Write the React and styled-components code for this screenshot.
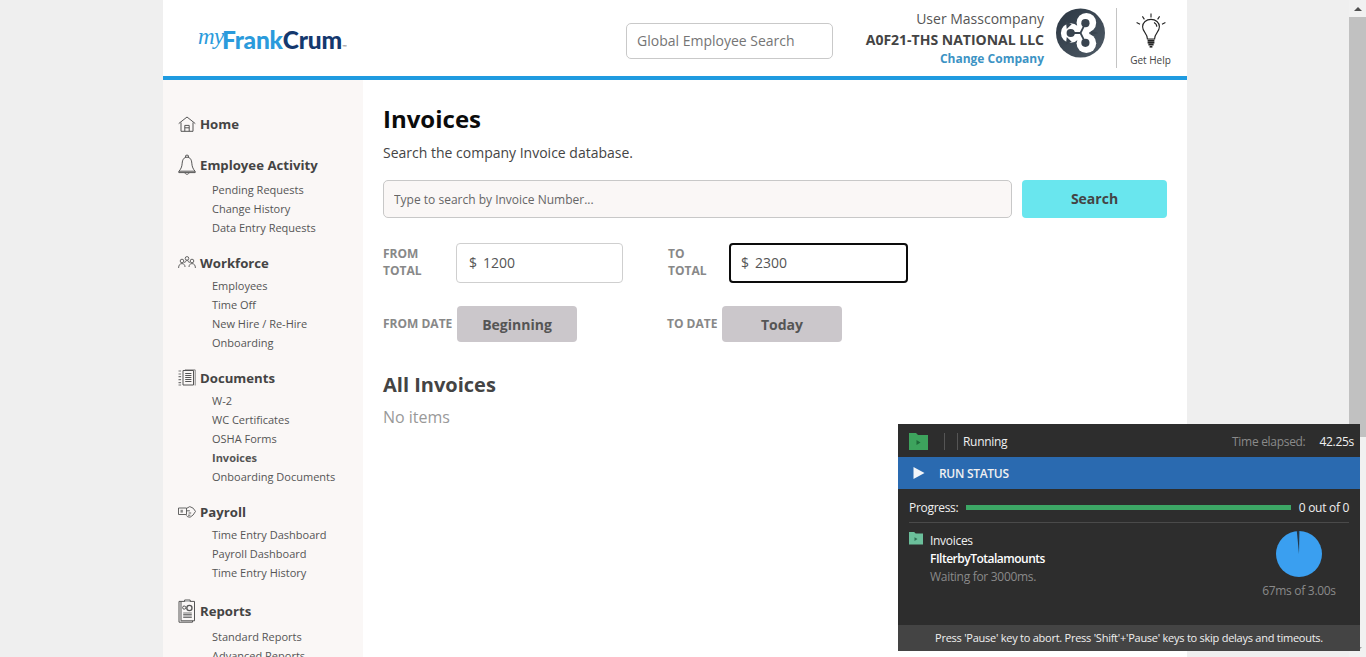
import React from "react";
import styled, { createGlobalStyle } from "styled-components";

const GlobalStyle = createGlobalStyle`
  html, body {
    margin: 0;
    height: 100%;
    overflow: hidden;
    background: #efefef;
    font-family: "Open Sans", "Liberation Sans", sans-serif;
  }
`;

// Sidebar data
const NAV = [
  { title: "Home", icon: "home", height: 27 },
  {
    title: "Employee Activity",
    icon: "bell",
    height: 31,
    links: ["Pending Requests", "Change History", "Data Entry Requests"],
  },
  {
    title: "Workforce",
    icon: "people",
    height: 27,
    links: ["Employees", "Time Off", "New Hire / Re-Hire", "Onboarding"],
  },
  {
    title: "Documents",
    icon: "docs",
    height: 27,
    links: ["W-2", "WC Certificates", "OSHA Forms", "Invoices", "Onboarding Documents"],
  },
  {
    title: "Payroll",
    icon: "hand",
    height: 27,
    links: ["Time Entry Dashboard", "Payroll Dashboard", "Time Entry History"],
  },
  {
    title: "Reports",
    icon: "reports",
    height: 33,
    links: ["Standard Reports", "Advanced Reports"],
  },
];

const NavIcon = ({ name }) => {
  const common = { fill: "none", stroke: "#555", strokeWidth: 1, strokeLinejoin: "round" };
  if (name === "home") {
    return (
      <svg width="18" height="16" viewBox="0 0 18 16" {...common}>
        <path d="M.7 7.6 9 1l8.3 6.6" />
        <path d="M3 6.5v8.8h12V6.5" />
        <path d="M6.8 15.3V9.4h4.4v5.9" />
        <path d="M6.8 11.8h4.4" />
      </svg>
    );
  }
  if (name === "bell") {
    return (
      <svg width="18" height="22" viewBox="0 0 18 22" {...common}>
        <path d="M7.6 3.4V1.6Q9 .4 10.4 1.6v1.8" />
        <path d="M9 3.2c-3.2 0-4.6 2.6-4.8 6C4 13 2.6 15.4 1 17.2h16c-1.6-1.8-3-4.2-3.2-8-.2-3.4-1.6-6-4.8-6Z" />
        <path d="M.8 17.2v1.4h16.4v-1.4" />
        <path d="M7 18.8c.4 2 3.6 2 4 0" />
      </svg>
    );
  }
  if (name === "people") {
    return (
      <svg width="18" height="13" viewBox="0 0 18 13" {...common} strokeWidth=".9">
        <circle cx="4" cy="5" r="1.8" />
        <path d="M.6 12c0-3 1.4-4.4 3.4-4.4S7 9 7 11" />
        <circle cx="9" cy="2.4" r="1.8" />
        <path d="M6.6 7c.4-1.6 1.2-2.4 2.4-2.4s2 .8 2.4 2.4" />
        <circle cx="14" cy="5" r="1.8" />
        <path d="M11 11c0-2 1-3.4 3-3.4s3.4 1.4 3.4 4.4" />
      </svg>
    );
  }
  if (name === "docs") {
    return (
      <svg width="18" height="18" viewBox="0 0 18 18" {...common}>
        <path d="M5 1.5h10.5v14.5H5z" />
        <path d="M7 1.5v-.6h10.2v15.6" strokeWidth=".7" />
        <path d="M7.2 4.5h6.2M7.2 6.5h6.2M7.2 8.5h6.2M7.2 10.5h6.2M7.2 12.5h6.2" strokeWidth="1.1" />
        <path d="M.5 2h2.6M.5 5h2.6M.5 7.6h2.6M.5 10.6h2.6M.5 13.6h2.6M.5 16h2.6" strokeWidth="1.2" stroke="#777" />
      </svg>
    );
  }
  if (name === "hand") {
    return (
      <svg width="18" height="12" viewBox="0 0 18 12" {...common} strokeWidth=".9">
        <path d="M.5 2h8v6.5h-8z" />
        <path d="M2.5 3.8h2.4v2.8H2.5z" fill="#888" stroke="none" />
        <path d="M8.5 2.4 11.8.6l3.4 1.6 2.3 3.2-2.4 3.6-3 2.2-2.4-.4-1.4-1.4" />
        <path d="M8.5 4.8h3.4M10.6 7h2.6M10 9.2h2.4" />
      </svg>
    );
  }
  return (
    <svg width="18" height="24" viewBox="0 0 18 24" {...common}>
      <path d="M3 2.4H1v20.8h13.5v-1.4" />
      <path d="M3 2.4h13.5v19.4H3z" />
      <path d="M6.6 2.6V1h5.6v1.6" fill="#fff" />
      <circle cx="6.2" cy="8.6" r="1.6" />
      <circle cx="11.4" cy="9" r="2.6" strokeWidth="1.3" />
      <path d="M5.2 14h8.6M5.2 15.5h8.6M5.2 17h8.6M5.2 18.5h8.6" stroke="#777" strokeWidth="1" />
    </svg>
  );
};

const AvatarLogo = () => (
  <svg width="49" height="50" viewBox="0 0 50 50">
    <defs>
      <linearGradient id="avatarFill" x1="0" y1="0" x2="1" y2="1">
        <stop offset="0" stopColor="#2b3642" />
        <stop offset="1" stopColor="#4f5b66" />
      </linearGradient>
    </defs>
    <circle cx="25" cy="25" r="25" fill="url(#avatarFill)" />
    <g fill="#fff">
      <circle cx="15" cy="25" r="10" />
      <circle cx="31" cy="14.5" r="10" />
      <circle cx="31" cy="35.5" r="10" />
      <path d="M20 18h14v14H20z" />
    </g>
    <path d="M43 25l-7-2v4zM10 13l6 3-5 5zM10 37l6-3-5-5z" fill="#39444f" />
    <path d="M15 25h10l5-10M25 25l5 10" stroke="#39444f" strokeWidth="1.8" fill="none" />
    <g fill="#39444f">
      <circle cx="15" cy="25" r="4.2" />
      <circle cx="30" cy="15" r="4.2" />
      <circle cx="30" cy="35" r="4.2" />
    </g>
  </svg>
);

const BulbIcon = () => (
  <svg width="32" height="36" viewBox="0 0 32 36" fill="none" stroke="#222" strokeWidth="1.1">
    <path d="M16 .5v4M7.4 3.4l2 3M24.6 3.4l-2 3M1.6 9.6l3.4 1.6M30.4 9.6 27 11.2" />
    <path d="M12.4 26c0-3-1-4.4-2.6-6.6-1.4-2-2.2-3.6-2.2-5.6 0-4.2 3.6-7.4 8.4-7.4s8.4 3.2 8.4 7.4c0 2-.8 3.6-2.2 5.6-1.6 2.2-2.6 3.6-2.6 6.6Z" />
    <path d="M19 9.4c1.6.8 2.8 2.4 2.8 4.4" />
    <path d="M12.6 27.6h6.8M12.6 29.6h6.8M13.4 31.6h5.2" strokeWidth="1.6" />
    <path d="M14.6 33.8h2.8" strokeWidth="1.6" />
  </svg>
);

const PanelFolder = ({ size }) => (
  <svg width={size} height={size * 0.9} viewBox="0 0 19 17">
    <path d="M0 0h7l2 2h10v15H0z" fill={size > 14 ? "#3da35d" : "#6bbf9b"} />
    <path d="M7.5 7v5l4-2.5z" fill={size > 14 ? "#1f6b3a" : "#2f6f55"} />
  </svg>
);

const App = () => (
  <>
    <GlobalStyle />
    <Viewport>
      <PageArea>
        <Page>
          <Header>
            <Logo>
              <LogoMy>my</LogoMy>
              <LogoFrank>Frank</LogoFrank>
              <LogoCrum>Crum</LogoCrum>
              <LogoMark>™</LogoMark>
            </Logo>
            <GlobalSearch placeholder="Global Employee Search" />
            <UserBlock>
              <UserName>User Masscompany</UserName>
              <CompanyName>A0F21-THS NATIONAL LLC</CompanyName>
              <ChangeCompany href="#">Change Company</ChangeCompany>
            </UserBlock>
            <Avatar>
              <AvatarLogo />
            </Avatar>
            <HelpBlock>
              <BulbIcon />
              <HelpLabel>Get Help</HelpLabel>
            </HelpBlock>
          </Header>
          <Body>
            <Sidebar>
              {NAV.map((group) => (
                <NavGroup key={group.title}>
                  <NavHeading $height={group.height}>
                    <NavIconSlot>
                      <NavIcon name={group.icon} />
                    </NavIconSlot>
                    {group.title}
                  </NavHeading>
                  {group.links &&
                    group.links.map((link) => (
                      <NavLink key={link} $active={link === "Invoices"}>
                        {link}
                      </NavLink>
                    ))}
                </NavGroup>
              ))}
            </Sidebar>
            <Main>
              <Title>Invoices</Title>
              <Subtitle>Search the company Invoice database.</Subtitle>
              <SearchRow>
                <SearchInput placeholder="Type to search by Invoice Number..." />
                <SearchButton>Search</SearchButton>
              </SearchRow>
              <FilterRow>
                <FilterCell $width={285}>
                  <FilterLabel $width={73}>
                    FROM
                    <br />
                    TOTAL
                  </FilterLabel>
                  <MoneyField $width={167}>
                    <span>$</span>
                    <span>1200</span>
                  </MoneyField>
                </FilterCell>
                <FilterCell>
                  <FilterLabel $width={61}>
                    TO
                    <br />
                    TOTAL
                  </FilterLabel>
                  <MoneyField $width={179} $focused>
                    <span>$</span>
                    <span>2300</span>
                  </MoneyField>
                </FilterCell>
              </FilterRow>
              <DateRow>
                <FilterCell $width={284}>
                  <FilterLabel $width={74}>FROM DATE</FilterLabel>
                  <DateButton>Beginning</DateButton>
                </FilterCell>
                <FilterCell>
                  <FilterLabel $width={55}>TO DATE</FilterLabel>
                  <DateButton>Today</DateButton>
                </FilterCell>
              </DateRow>
              <SectionTitle>All Invoices</SectionTitle>
              <EmptyText>No items</EmptyText>
            </Main>
          </Body>
        </Page>
      </PageArea>
      <ScrollTrack>
        <ScrollArrow />
        <ScrollThumb />
        <ScrollArrow $down />
      </ScrollTrack>
    </Viewport>

    <RunPanel>
      <PanelTop>
        <PanelFolder size={19} />
        <TopDivider $left={16} />
        <TopDivider $left={12} />
        <RunningText>Running</RunningText>
        <ElapsedLabel>Time elapsed:</ElapsedLabel>
        <ElapsedValue>42.25s</ElapsedValue>
      </PanelTop>
      <StatusBar>
        <svg width="12" height="12" viewBox="0 0 12 12">
          <path d="M.5 0v12L11.5 6z" fill="#f2f5f9" />
        </svg>
        RUN STATUS
      </StatusBar>
      <PanelBody>
        <ProgressRow>
          Progress:
          <ProgressBar />
          <span>0 out of 0</span>
        </ProgressRow>
        <StepRow>
          <StepIcon>
            <PanelFolder size={14} />
          </StepIcon>
          <StepText>
            <StepFolder>Invoices</StepFolder>
            <StepName>FIlterbyTotalamounts</StepName>
            <StepWait>Waiting for 3000ms.</StepWait>
          </StepText>
          <TimerBlock>
            <svg width="46" height="46" viewBox="0 0 46 46">
              <circle cx="23" cy="23" r="23" fill="#3a9ff0" />
              <path d="M23 23 20.8 0h2.6z" fill="#23384a" />
            </svg>
            <TimerText>67ms of 3.00s</TimerText>
          </TimerBlock>
        </StepRow>
      </PanelBody>
      <PanelFooter>Press 'Pause' key to abort. Press 'Shift'+'Pause' keys to skip delays and timeouts.</PanelFooter>
    </RunPanel>
  </>
);

const Viewport = styled.div`
  display: flex;
  height: 100vh;
  overflow: hidden;
`;

const PageArea = styled.div`
  flex: 1;
  display: flex;
  justify-content: center;
`;

const Page = styled.div`
  width: 1024px;
  margin-left: 1px;
  background: #fff;
  display: flex;
  flex-direction: column;
`;

const Header = styled.header`
  height: 76px;
  flex: none;
  display: flex;
  align-items: flex-start;
  border-bottom: 4px solid #1f9be0;
  color: #444;
`;

const Logo = styled.div`
  width: 428px;
  margin-left: 35px;
  margin-top: 26px;
  display: flex;
  align-items: baseline;
  font-family: Lato, "Open Sans", sans-serif;
  font-weight: 900;
  font-size: 24.5px;
  line-height: 28px;
  letter-spacing: -0.2px;
`;

const LogoMy = styled.span`
  font-family: "Liberation Serif", serif;
  font-style: italic;
  font-weight: 400;
  font-size: 23px;
  letter-spacing: -0.5px;
  color: #2b9bdc;
  width: 24px;
  transform: translateY(-5px);
`;

const LogoFrank = styled.span`
  color: #2b9bdc;
`;

const LogoCrum = styled.span`
  color: #14386e;
`;

const LogoMark = styled.span`
  font-size: 6px;
  font-weight: 400;
  color: #777;
`;

const GlobalSearch = styled.input`
  width: 207px;
  height: 36px;
  margin-top: 23px;
  box-sizing: border-box;
  padding: 0 10px 2px;
  border: 1px solid #c9c9c9;
  border-radius: 5px;
  background: #fff;
  font: 14px "Open Sans", sans-serif;
  &::placeholder {
    color: #757575;
    opacity: 1;
  }
`;

const UserBlock = styled.div`
  width: 211px;
  margin-top: 8px;
  display: flex;
  flex-direction: column;
  align-items: flex-end;
`;

const UserName = styled.div`
  font-size: 14px;
  line-height: 21px;
  color: #555;
`;

const CompanyName = styled.div`
  font-size: 14px;
  line-height: 21px;
  font-weight: 700;
  color: #444;
`;

const ChangeCompany = styled.a`
  font-size: 12px;
  line-height: 17px;
  font-weight: 700;
  color: #3c93c4;
  text-decoration: none;
`;

const Avatar = styled.div`
  margin: 8px 11px 0 12px;
  height: 50px;
`;

const HelpBlock = styled.div`
  margin-top: 8px;
  width: 68px;
  height: 60px;
  border-left: 1px solid #c4c4c4;
  display: flex;
  flex-direction: column;
  align-items: center;
  padding-top: 5px;
  box-sizing: border-box;
`;

const HelpLabel = styled.div`
  font-size: 10px;
  line-height: 14px;
  margin-top: 4px;
  color: #444;
`;

const Body = styled.div`
  flex: 1;
  display: flex;
  min-height: 0;
`;

const Sidebar = styled.nav`
  width: 200px;
  flex: none;
  box-sizing: border-box;
  padding: 30px 0 0 15px;
  background: #faf7f6;
  overflow: hidden;
`;

const NavGroup = styled.div`
  margin-bottom: 12px;
`;

const NavHeading = styled.div`
  height: ${(p) => p.$height}px;
  display: flex;
  align-items: center;
  font-size: 13.2px;
  font-weight: 700;
  color: #444;
`;

const NavIconSlot = styled.span`
  width: 22px;
  display: flex;
  justify-content: flex-start;
`;

const NavLink = styled.div`
  height: 19px;
  line-height: 19px;
  padding-left: 34px;
  font-size: 11px;
  font-weight: ${(p) => (p.$active ? 700 : 400)};
  color: #555;
  white-space: nowrap;
`;

const Main = styled.main`
  flex: 1;
  padding: 22px 20px 0;
  color: #444;
`;

const Title = styled.h1`
  margin: 0;
  font-size: 24px;
  line-height: 34px;
  font-weight: 700;
  color: #0b0b0b;
`;

const Subtitle = styled.p`
  margin: 7px 0 0;
  font-size: 14px;
  line-height: 20px;
  color: #444;
`;

const SearchRow = styled.div`
  margin-top: 17px;
  display: flex;
  gap: 10px;
`;

const SearchInput = styled.input`
  flex: 1;
  height: 38px;
  box-sizing: border-box;
  padding: 0 10px;
  border: 1px solid #c8c8c8;
  border-radius: 5px;
  background: #faf7f6;
  font: 12px "Open Sans", sans-serif;
  &::placeholder {
    color: #666;
    opacity: 1;
  }
`;

const SearchButton = styled.button`
  width: 145px;
  height: 38px;
  padding: 0 0 2px;
  border: 0;
  border-radius: 4px;
  background: #69e6ee;
  font: 700 14px "Open Sans", sans-serif;
  color: #444;
`;

const FilterRow = styled.div`
  margin-top: 25px;
  display: flex;
`;

const DateRow = styled.div`
  margin-top: 23px;
  display: flex;
`;

const FilterCell = styled.div`
  display: flex;
  align-items: center;
  width: ${(p) => (p.$width ? `${p.$width}px` : "auto")};
`;

const FilterLabel = styled.div`
  width: ${(p) => p.$width}px;
  flex: none;
  margin-bottom: 2px;
  font-size: 12px;
  line-height: 17px;
  font-weight: 700;
  color: #888;
  white-space: nowrap;
`;

const MoneyField = styled.div`
  width: ${(p) => p.$width}px;
  height: 40px;
  box-sizing: border-box;
  display: flex;
  align-items: center;
  gap: 6px;
  padding-left: ${(p) => (p.$focused ? 10 : 12)}px;
  padding-bottom: 2px;
  border: ${(p) => (p.$focused ? "2px solid #0c0c0c" : "1px solid #cfcfcf")};
  border-radius: 4px;
  font-size: 14px;
  color: #555;
`;

const DateButton = styled.button`
  width: 120px;
  height: 36px;
  border: 0;
  border-radius: 4px;
  background: #cbc7cb;
  font: 700 14px "Open Sans", sans-serif;
  color: #555;
`;

const SectionTitle = styled.h2`
  margin: 29px 0 0;
  font-size: 20px;
  line-height: 28px;
  font-weight: 700;
  color: #444;
`;

const EmptyText = styled.div`
  margin-top: 7px;
  font-size: 16px;
  line-height: 22px;
  color: #999;
`;

const ScrollTrack = styled.div`
  width: 17px;
  flex: none;
  display: flex;
  flex-direction: column;
  background: #f1f1f1;
`;

const ScrollArrow = styled.div`
  height: 17px;
  flex: none;
  margin-top: ${(p) => (p.$down ? "auto" : 0)};
  display: flex;
  align-items: center;
  justify-content: center;
  &::before {
    content: "";
    border-left: 4px solid transparent;
    border-right: 4px solid transparent;
    border-bottom: ${(p) => (p.$down ? 0 : "4px solid #505050")};
    border-top: ${(p) => (p.$down ? "4px solid #a3a3a3" : 0)};
  }
`;

const ScrollThumb = styled.div`
  height: 420px;
  background: #c1c1c1;
`;

const RunPanel = styled.aside`
  position: fixed;
  left: 898px;
  top: 424px;
  width: 462px;
  height: 227px;
  display: flex;
  flex-direction: column;
  background: #2d2d2d;
  color: #f0f0f0;
  font-size: 12px;
  letter-spacing: -0.3px;
  font-family: "Open Sans", sans-serif;
`;

const PanelTop = styled.div`
  height: 33px;
  flex: none;
  box-sizing: border-box;
  display: flex;
  align-items: center;
  padding: 2px 6px 0 11px;
`;

const TopDivider = styled.span`
  width: 1px;
  height: 17px;
  margin-left: ${(p) => p.$left}px;
  background: #555;
`;

const RunningText = styled.span`
  margin-left: 5px;
  flex: 1;
`;

const ElapsedLabel = styled.span`
  color: #8a8a8a;
  margin-right: 14px;
`;

const ElapsedValue = styled.span``;

const StatusBar = styled.div`
  height: 32px;
  flex: none;
  box-sizing: border-box;
  padding-left: 15px;
  display: flex;
  align-items: center;
  gap: 14px;
  background: #2a6ab0;
  font-weight: 600;
`;

const PanelBody = styled.div`
  flex: 1;
  padding: 0 11px;
`;

const ProgressRow = styled.div`
  height: 34px;
  box-sizing: border-box;
  padding-top: 3px;
  display: flex;
  align-items: center;
  gap: 8px;
  border-bottom: 1px solid #4a4a4a;
`;

const ProgressBar = styled.div`
  flex: 1;
  height: 5px;
  background: #3ca765;
`;

const StepRow = styled.div`
  display: flex;
  padding-top: 9px;
`;

const StepIcon = styled.div`
  width: 21px;
  flex: none;
`;

const StepText = styled.div`
  flex: 1;
  line-height: 18px;
`;

const StepFolder = styled.div``;

const StepName = styled.div`
  font-weight: 600;
  letter-spacing: -0.5px;
  color: #fff;
`;

const StepWait = styled.div`
  color: #8a8a8a;
`;

const TimerBlock = styled.div`
  width: 74px;
  margin: -1px 13px 0 0;
  display: flex;
  flex-direction: column;
  align-items: center;
`;

const TimerText = styled.div`
  margin-top: 5px;
  line-height: 18px;
  color: #8a8a8a;
  white-space: nowrap;
`;

const PanelFooter = styled.div`
  height: 26px;
  flex: none;
  box-sizing: border-box;
  padding-bottom: 2px;
  display: flex;
  align-items: center;
  justify-content: center;
  background: #444;
  font-size: 11px;
  letter-spacing: -0.25px;
`;

export default App;
